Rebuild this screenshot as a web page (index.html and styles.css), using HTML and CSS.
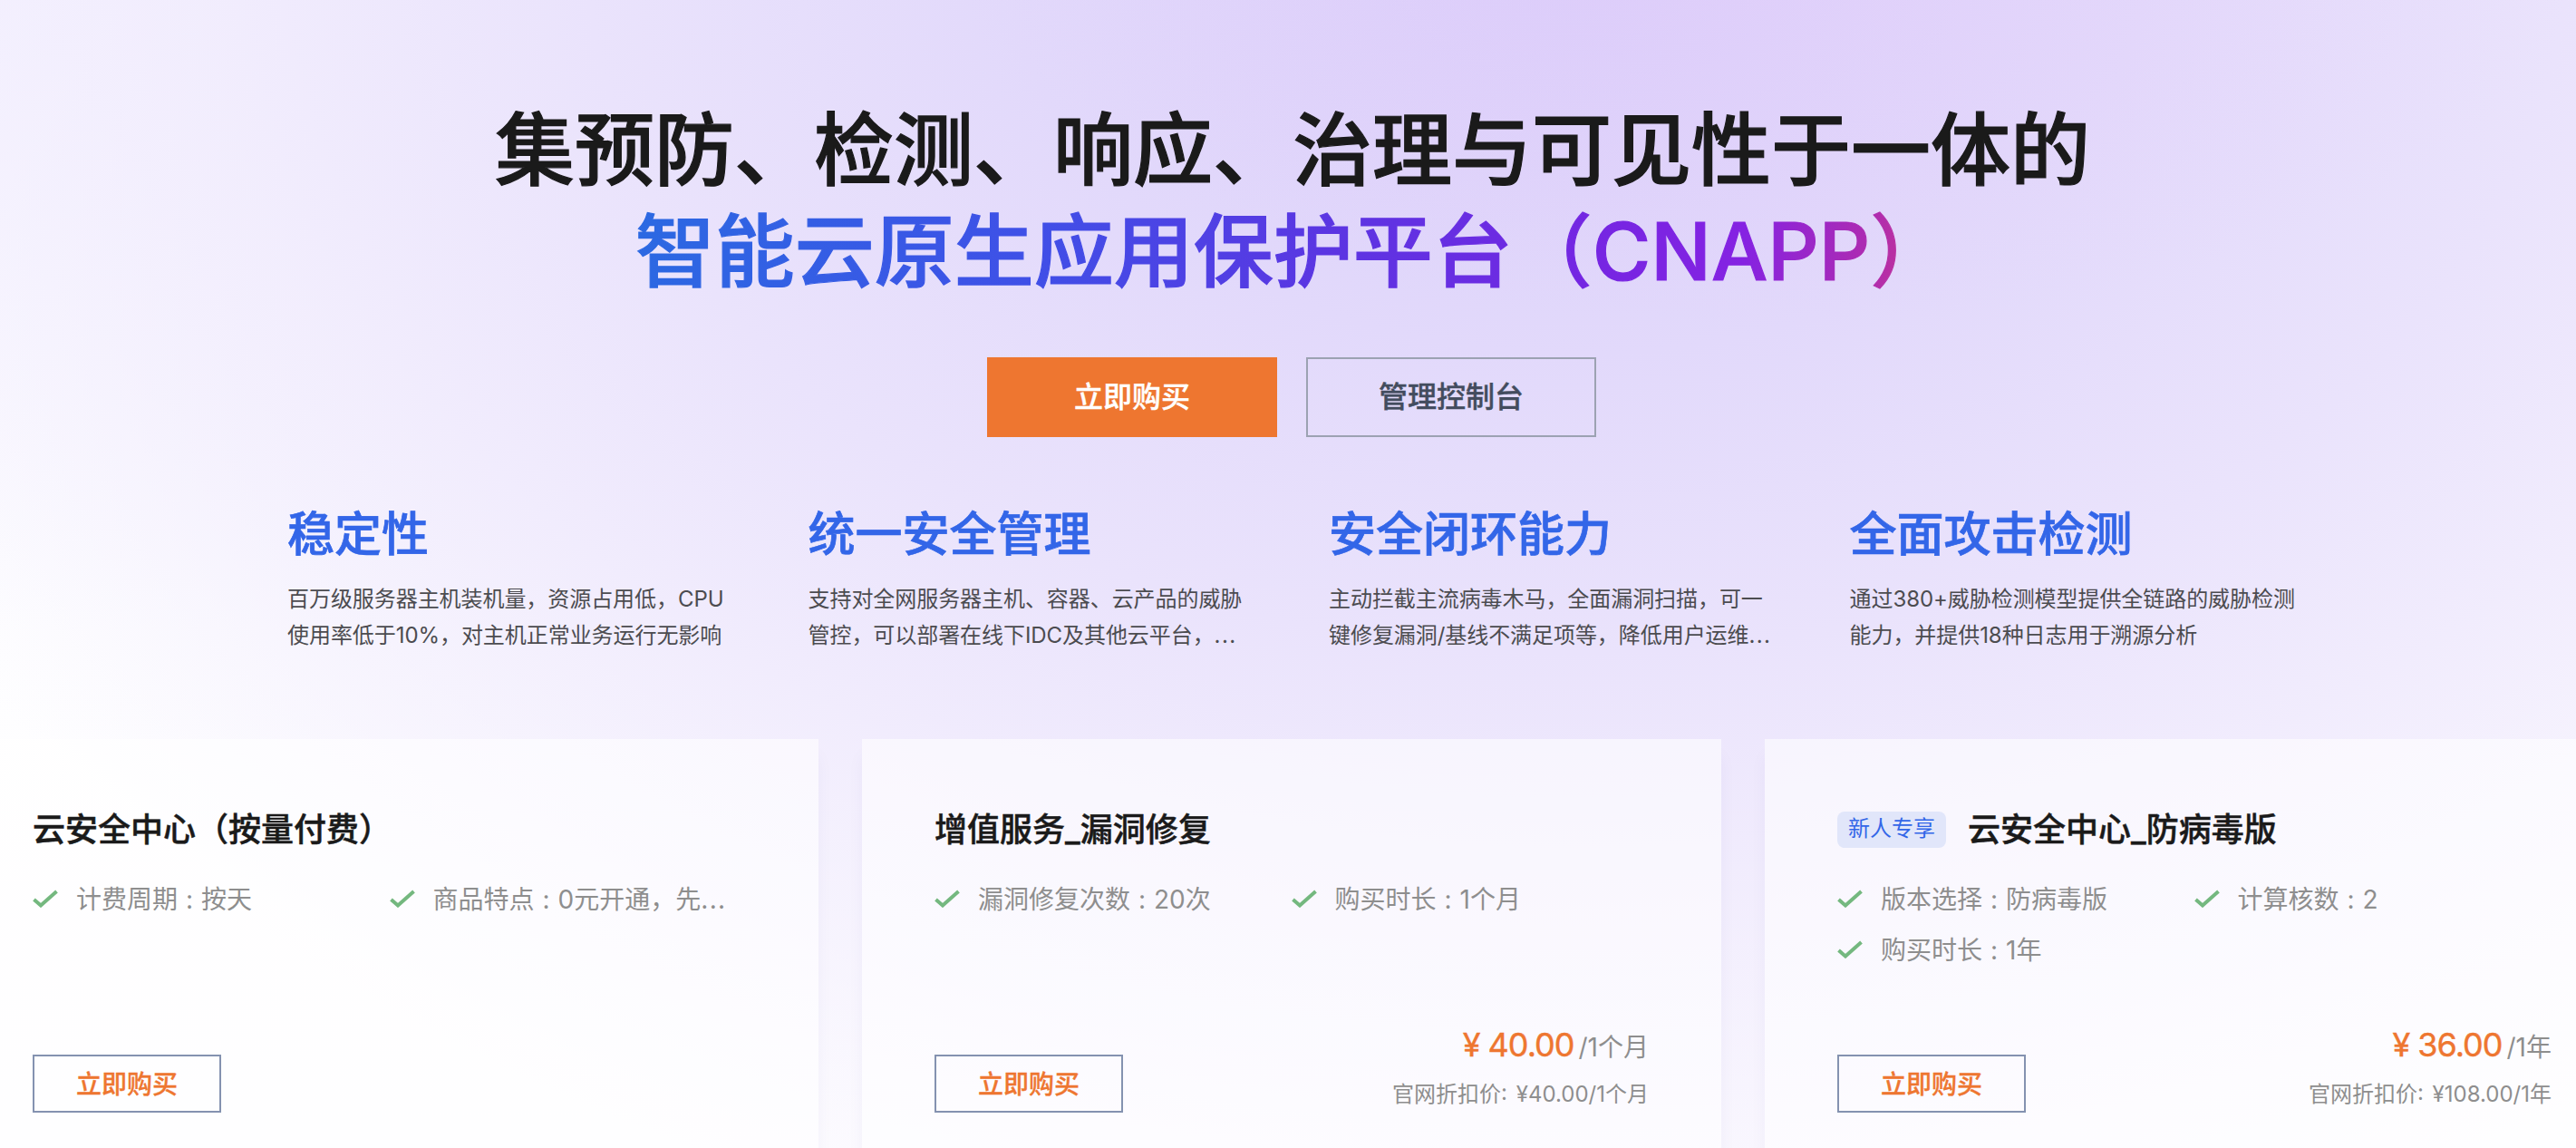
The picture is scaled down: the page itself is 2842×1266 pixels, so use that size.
FILE: index.html
```
<!DOCTYPE html>
<html lang="zh-CN">
<head>
    <meta charset="UTF-8">
    <meta name="viewport" content="width=device-width, initial-scale=1.0">
    <title>云安全中心</title>
    <link rel="stylesheet" href="styles.css">
</head>
<body>
    <svg class="sprite" width="0" height="0">
        <symbol id="check" viewBox="0 0 28 20">
            <path d="M1.5 11 L9 17.5 L26.5 2" fill="none" stroke="#74b87f" stroke-width="4"/>
        </symbol>
    </svg>

    <div class="page">
        <section class="hero">
            <h1>
                集预防、检测、响应、治理与可见性于一体的<br>
                <span class="gradient-text">智能云原生应用保护平台（CNAPP）</span>
            </h1>
            <div class="hero-buttons">
                <a class="btn btn-primary">立即购买</a>
                <a class="btn btn-outline">管理控制台</a>
            </div>
        </section>

        <section class="features">
            <div class="feature">
                <h2>稳定性</h2>
                <p>百万级服务器主机装机量，资源占用低，CPU<br>使用率低于10%，对主机正常业务运行无影响</p>
            </div>
            <div class="feature">
                <h2>统一安全管理</h2>
                <p>支持对全网服务器主机、容器、云产品的威胁<br>管控，可以部署在线下IDC及其他云平台，<span class="dots">...</span></p>
            </div>
            <div class="feature">
                <h2>安全闭环能力</h2>
                <p>主动拦截主流病毒木马，全面漏洞扫描，可一<br>键修复漏洞/基线不满足项等，降低用户运维<span class="dots">...</span></p>
            </div>
            <div class="feature">
                <h2>全面攻击检测</h2>
                <p>通过380+威胁检测模型提供全链路的威胁检测<br>能力，并提供18种日志用于溯源分析</p>
            </div>
        </section>

        <section class="cards">
            <div class="card">
                <div class="card-title"><h3>云安全中心（按量付费）</h3></div>
                <ul class="specs">
                    <li><svg class="check"><use href="#check"/></svg><span>计费周期<i>:</i>按天</span></li>
                    <li><svg class="check"><use href="#check"/></svg><span>商品特点<i>:</i>0元开通，先<span class="dots">...</span></span></li>
                </ul>
                <div class="card-footer">
                    <a class="buy">立即购买</a>
                </div>
            </div>

            <div class="card">
                <div class="card-title"><h3>增值服务_漏洞修复</h3></div>
                <ul class="specs">
                    <li><svg class="check"><use href="#check"/></svg><span>漏洞修复次数<i>:</i>20次</span></li>
                    <li><svg class="check"><use href="#check"/></svg><span>购买时长<i>:</i>1个月</span></li>
                </ul>
                <div class="card-footer">
                    <a class="buy">立即购买</a>
                    <div class="price">
                        <div class="price-now"><b><em>¥</em>40.00</b>/1个月</div>
                        <div class="price-old">官网折扣价: ¥40.00/1个月</div>
                    </div>
                </div>
            </div>

            <div class="card">
                <div class="card-title"><span class="tag">新人专享</span><h3>云安全中心_防病毒版</h3></div>
                <ul class="specs">
                    <li><svg class="check"><use href="#check"/></svg><span>版本选择<i>:</i>防病毒版</span></li>
                    <li><svg class="check"><use href="#check"/></svg><span>计算核数<i>:</i>2</span></li>
                    <li><svg class="check"><use href="#check"/></svg><span>购买时长<i>:</i>1年</span></li>
                </ul>
                <div class="card-footer">
                    <a class="buy">立即购买</a>
                    <div class="price">
                        <div class="price-now"><b><em>¥</em>36.00</b>/1年</div>
                        <div class="price-old">官网折扣价: ¥108.00/1年</div>
                    </div>
                </div>
            </div>
        </section>
    </div>
</body>
</html>
```

FILE: styles.css
```
:root {
    --blue: #3366e8;
    --orange: #ee7630;
    --dark: #1a1a1a;
    --gray: #8e8e8e;
}

* {
    margin: 0;
    padding: 0;
    box-sizing: border-box;
}

body {
    height: 1266px;
    overflow: hidden;
    font-family: Inter, "Noto Sans CJK SC", sans-serif;
    color: var(--dark);
    background: #fff;
}

.sprite {
    display: none;
}

.page {
    width: 2850px;
    height: 1266px;
    overflow: hidden;
    background:
        radial-gradient(ellipse 900px 420px at 1950px -60px, rgba(232, 205, 250, 0.35), transparent),
        radial-gradient(ellipse 2100px 1500px at 1740px -60px, #d8ccfa 0%, #e2d9fb 30%, #eae3fc 52%, rgba(241, 236, 253, 0.88) 72%, rgba(255, 255, 255, 0) 100%),
        linear-gradient(180deg, #f5f3ff 0%, #fefeff 55%, #fdfcff 100%);
}

.hero {
    padding-top: 109px;
    text-align: center;
}

h1 {
    padding-left: 2px;
    font-size: 88px;
    line-height: 112px;
    font-weight: 500;
    -webkit-text-stroke: 1.2px;
}

.gradient-text {
    display: inline-block;
    background: linear-gradient(95deg, #2b69e2 0%, #3f50e7 30%, #5a36e2 52%, #7426e2 72%, #8522e2 84%, #b02cae 94%, #d23a80 100%);
    -webkit-background-clip: text;
    background-clip: text;
    color: transparent;
}

.hero-buttons {
    display: flex;
    justify-content: center;
    gap: 32px;
    margin-top: 61px;
}

.btn {
    width: 320px;
    height: 88px;
    line-height: 87px;
    font-size: 32px;
    font-weight: 500;
    -webkit-text-stroke: 0.4px;
}

.btn-primary {
    background: var(--orange);
    color: #fff;
}

.btn-outline {
    border: 2px solid #9ca2b2;
    line-height: 83px;
    color: #434c5e;
}

.features {
    display: flex;
    gap: 82.5px;
    margin: 72px 0 0 317px;
}

.feature {
    width: 492px;
    flex-shrink: 0;
    white-space: nowrap;
}

.feature h2 {
    font-size: 52px;
    line-height: 72px;
    font-weight: 500;
    color: var(--blue);
    -webkit-text-stroke: 0.7px;
}

.feature p {
    margin-top: 15px;
    font-size: 24px;
    line-height: 40px;
    letter-spacing: -0.06px;
    color: #4c4c50;
}

.dots {
    letter-spacing: 1.4px;
}

.cards {
    display: flex;
    gap: 48px;
    margin: 94px 0 0 -45px;
}

.card {
    display: flex;
    flex-direction: column;
    flex-shrink: 0;
    width: 948px;
    height: 491px;
    padding: 76px 80px 79px;
    background: rgba(255, 255, 255, 0.58);
    box-shadow: 0 18px 18px rgba(60, 40, 120, 0.04);
}

.card:first-child {
    padding-left: 81px;
}

.card-title {
    display: flex;
    align-items: center;
    height: 48px;
}

.card-title h3 {
    font-size: 36px;
    line-height: 48px;
    font-weight: 500;
    -webkit-text-stroke: 0.5px;
}

.tag {
    width: 120px;
    height: 40px;
    margin-right: 24px;
    border-radius: 8px;
    font-size: 24px;
    line-height: 38px;
    text-align: center;
    color: var(--blue);
    background: #e1e6fa;
}

.specs {
    display: flex;
    flex-wrap: wrap;
    margin-top: 24px;
    list-style: none;
}

.specs li {
    display: flex;
    align-items: center;
    width: 393.5px;
    height: 56px;
    font-size: 28px;
    color: var(--gray);
    white-space: nowrap;
}

.specs li > span {
    padding-bottom: 2px;
}

.specs i {
    display: inline-block;
    width: 26px;
    font-style: normal;
    text-align: center;
}

.check {
    width: 28px;
    height: 20px;
    margin-right: 20px;
}

.card-footer {
    display: flex;
    justify-content: space-between;
    align-items: flex-end;
    margin-top: auto;
}

.buy {
    width: 208px;
    height: 64px;
    border: 2px solid #8492b0;
    font-size: 28px;
    line-height: 62px;
    font-weight: 500;
    text-align: center;
    color: var(--orange);
    -webkit-text-stroke: 0.3px;
}

.price {
    text-align: right;
    color: var(--gray);
}

.price-now {
    font-size: 28px;
    line-height: 48px;
}

.price-now b {
    margin-right: 5px;
    font-size: 36px;
    font-weight: 400;
    letter-spacing: -1px;
    color: var(--orange);
    -webkit-text-stroke: 0.4px;
}

.price-now em {
    margin-right: 9px;
    font-size: 36px;
    font-style: normal;
}

.price-old {
    margin-top: 8px;
    font-size: 24px;
    line-height: 40px;
    word-spacing: 3px;
}
```
